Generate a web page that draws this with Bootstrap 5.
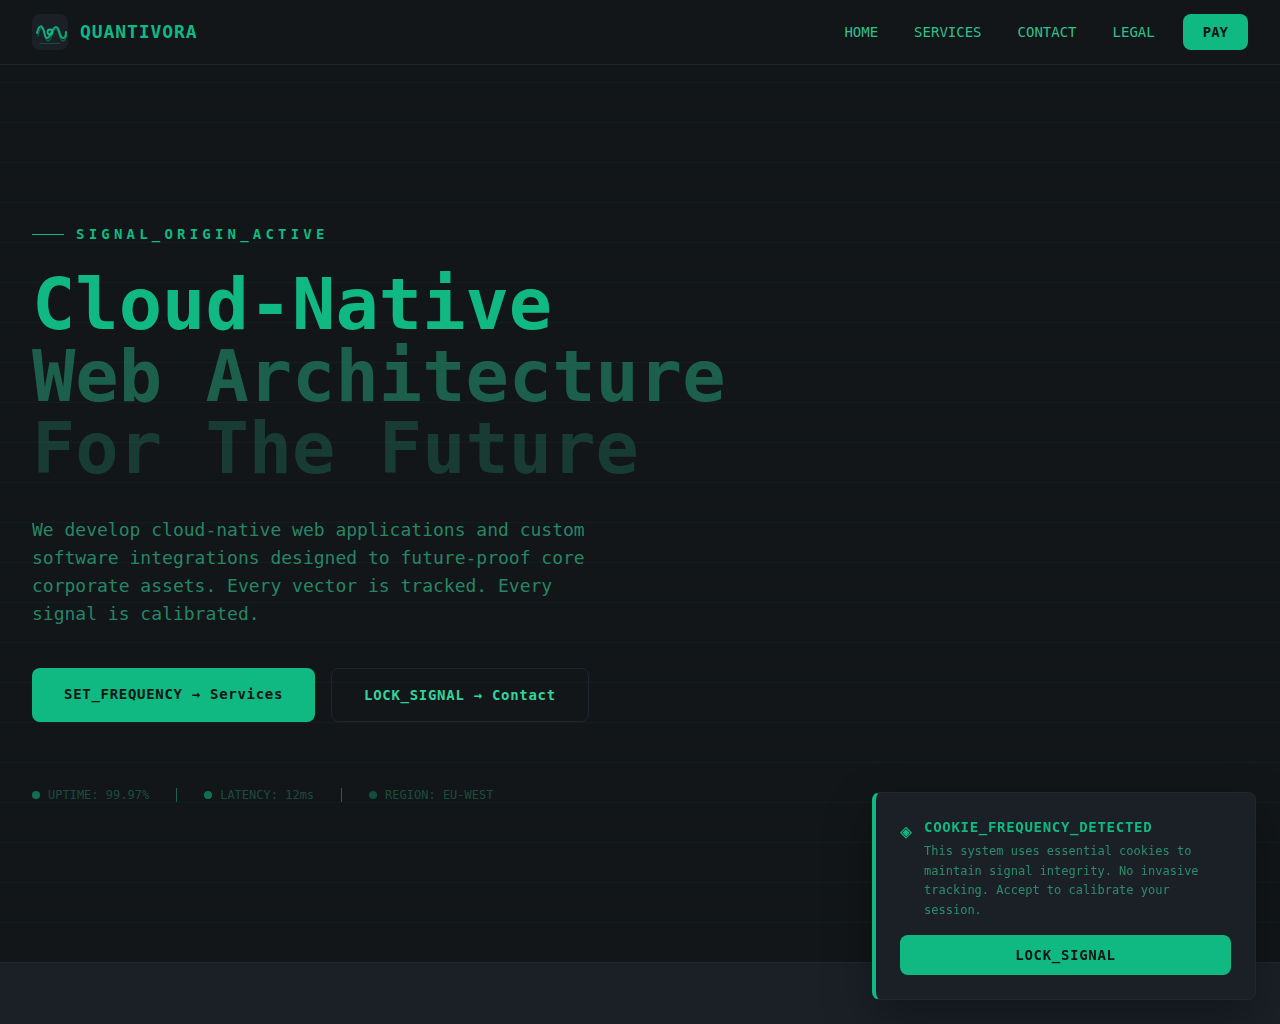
<!DOCTYPE html>
<html lang="en">
<head>
<meta charset="utf-8">
<meta name="viewport" content="width=device-width, initial-scale=1">
<title>Quantivora</title>
<link href="https://cdn.jsdelivr.net/npm/bootstrap@5.3.0/dist/css/bootstrap.min.css" rel="stylesheet">
<style>
:root{--q-bg:#121619;--q-panel:#1b2027;--q-line:#1f2433;--q-green:#10b981;--q-mint:#34d399}
body{background:var(--q-bg);color:var(--q-mint);font:14px/20px "DejaVu Sans Mono","Liberation Mono",monospace}
a{text-decoration:none}
.q-header{height:65px;background:var(--q-bg);border-bottom:1px solid var(--q-line);margin-bottom:-1px}
.q-brand{color:var(--q-green);font-size:18px;line-height:28px;letter-spacing:.05em}
.q-nav{gap:36px}
.q-nav a{color:var(--q-mint);opacity:.9}
.q-btn{background:var(--q-green);color:#0d1613;border:0;border-radius:8px;font-size:14px;line-height:20px;font-weight:700}
.q-btn:hover{background:var(--q-mint)}
.q-pay{margin-left:28px;padding:8px 20px}
.q-track{letter-spacing:.05em}
.q-cta{padding:16px 32px}
.q-ghost{background:transparent;color:var(--q-mint);border:1px solid var(--q-line)}
.q-hero{padding:160px 32px 158px;background:repeating-linear-gradient(0deg,transparent 0,transparent 39px,rgba(52,211,153,.04) 39px,rgba(52,211,153,.04) 40px)}
.q-eyebrow{color:var(--q-green);letter-spacing:.3em;gap:12px}
.q-eyebrow::before{content:"";width:32px;height:1px;background:var(--q-green)}
.q-title{font-size:72px;line-height:72px;color:var(--q-green);margin:24px 0 32px}
.q-fade-a{color:rgba(44,206,148,.4)}
.q-fade-b{color:rgba(52,211,153,.2)}
.q-copy{max-width:576px;font-size:18px;line-height:28px;color:rgba(52,211,153,.6);margin-bottom:40px}
.q-stats{margin-top:64px;gap:27px;font-size:12px;line-height:18px;color:rgba(52,211,153,.3)}
.q-dot{width:8px;height:8px;border-radius:50%;background:var(--q-green);opacity:.55}
.q-dot-dim{opacity:.35}
.q-rule{width:1px;height:14px;background:rgba(52,211,153,.4)}
.q-next{background:var(--q-panel);border-top:1px solid #20262d}
.q-cookie{width:384px;max-width:calc(100% - 48px);right:24px;bottom:24px;padding:24px;background:var(--q-panel);border:1px solid #20272f;border-left:4px solid var(--q-green);border-radius:8px;box-shadow:0 20px 50px rgba(0,0,0,.3)}
.q-notice{margin-bottom:15px}
.q-gem{font-size:20px;line-height:28px;color:var(--q-green)}
.q-cookie h2{font-size:14px;line-height:20px;color:var(--q-green);margin-bottom:5px}
.q-cookie p{font-size:12px;line-height:1.625;color:rgba(52,211,153,.6)}
.q-accept{padding:10px}
</style>
</head>
<body class="d-flex flex-column min-vh-100">
<header class="q-header sticky-top d-flex align-items-center justify-content-between px-4">
  <a href="#" class="q-brand d-flex align-items-center fw-bold ms-2">
    <svg class="me-2" width="40" height="36" viewBox="0 0 40 36" fill="none" aria-hidden="true">
      <rect width="36" height="36" rx="8" fill="#1a2026"/>
      <g stroke-linecap="round">
        <path d="M6 22C7 16 9 13 11 15C13 18 13 27 16 27C20 27 20 15 24 15C27 15 27 27 31 27C33 27 34 24 35 21" stroke="#10b981" stroke-opacity=".45" stroke-width="1.200"/>
        <path d="M5 19C6 14 8 11 10 13C13 16 12 24 15 24C19 24 20 13 24 13C28 13 27 24 31 24C33 24 34 21 34 18" stroke="#10b981" stroke-opacity=".9" stroke-width="2"/>
        <circle cx="18" cy="18" r="2.500" stroke="#10b981" stroke-width="1.800"/>
        <path d="M8 29.500H28" stroke="#10b981" stroke-opacity=".3"/>
      </g>
    </svg>
    QUANTIVORA
  </a>
  <div class="d-flex align-items-center me-2">
    <nav class="q-nav d-none d-md-flex">
      <a href="#">HOME</a><a href="#services">SERVICES</a><a href="#contact">CONTACT</a><a href="#legal">LEGAL</a>
    </nav>
    <a href="#pay" class="q-btn q-pay">PAY</a>
  </div>
</header>
<main class="flex-grow-1 d-flex flex-column">
  <section class="q-hero">
    <div class="q-eyebrow d-flex align-items-center fw-bold">SIGNAL_ORIGIN_ACTIVE</div>
    <h1 class="q-title fw-bold"><span class="d-block">Cloud-Native</span><span class="d-block q-fade-a">Web Architecture</span><span class="d-block q-fade-b">For The Future</span></h1>
    <p class="q-copy">We develop cloud-native web applications and custom software integrations designed to future-proof core corporate assets. Every vector is tracked. Every signal is calibrated.</p>
    <div class="d-flex flex-wrap gap-3">
      <a href="#services" class="q-btn q-cta q-track">SET_FREQUENCY → Services</a>
      <a href="#contact" class="q-btn q-cta q-ghost q-track">LOCK_SIGNAL → Contact</a>
    </div>
    <div class="q-stats d-flex flex-wrap align-items-center">
      <div class="d-flex align-items-center gap-2"><span class="q-dot"></span>UPTIME: 99.97%</div>
      <span class="q-rule"></span>
      <div class="d-flex align-items-center gap-2"><span class="q-dot"></span>LATENCY: 12ms</div>
      <span class="q-rule"></span>
      <div class="d-flex align-items-center gap-2"><span class="q-dot q-dot-dim"></span>REGION: EU-WEST</div>
    </div>
  </section>
  <section id="services" class="q-next flex-grow-1"></section>
</main>
<aside class="q-cookie position-fixed" aria-label="Cookie notice">
  <div class="q-notice d-flex align-items-start">
    <span class="q-gem me-2 pe-1" aria-hidden="true">◈</span>
    <div><h2 class="fw-bold q-track">COOKIE_FREQUENCY_DETECTED</h2>
    <p class="mb-0">This system uses essential cookies to maintain signal integrity. No invasive tracking. Accept to calibrate your session.</p></div>
  </div>
  <button type="button" class="q-btn q-accept q-track w-100 d-block">LOCK_SIGNAL</button>
</aside>
<script src="https://cdn.jsdelivr.net/npm/bootstrap@5.3.0/dist/js/bootstrap.bundle.min.js"></script>
</body>
</html>
